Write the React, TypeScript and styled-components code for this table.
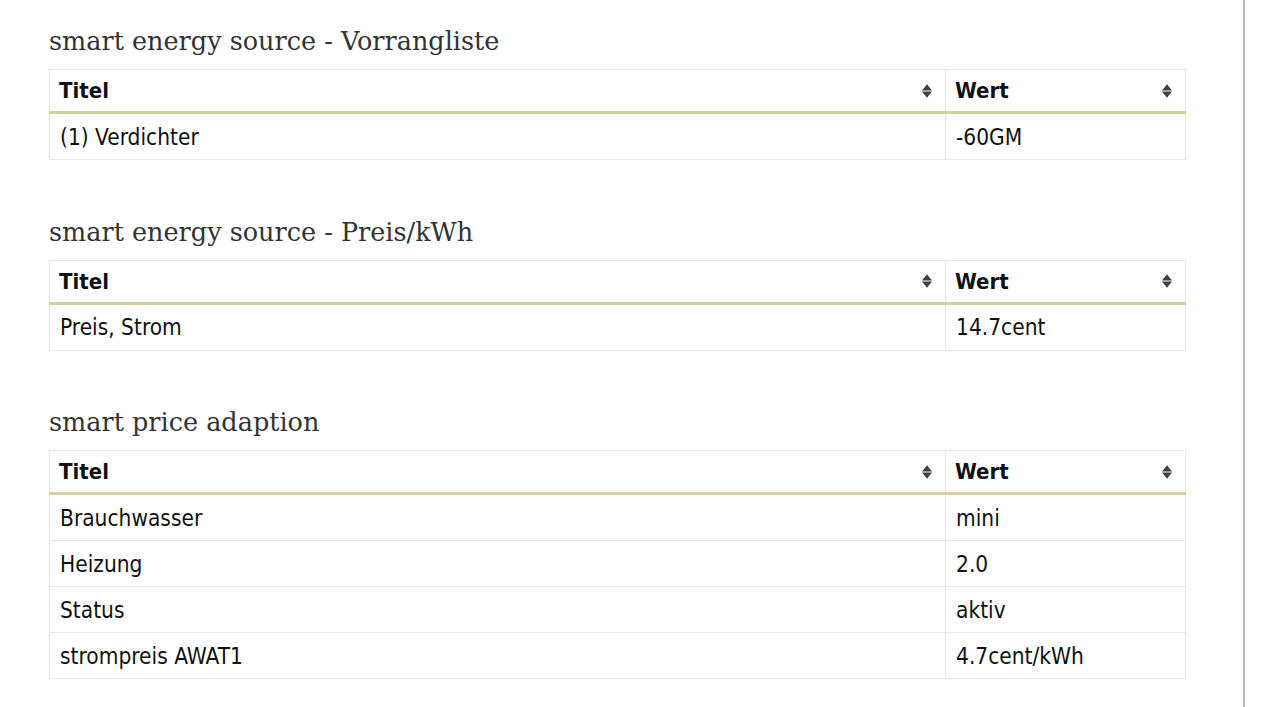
import React from 'react'
import styled, { createGlobalStyle } from 'styled-components'

const GlobalStyle = createGlobalStyle`
  html, body {
    margin: 0;
    padding: 0;
    background: #ffffff;
  }
`

interface Row {
  title: string,
  value: string
}

interface Section {
  heading: string,
  rows: Row[]
}

const sections: Section[] = [
  {
    heading: 'smart energy source - Vorrangliste',
    rows: [{ title: '(1) Verdichter', value: '-60GM' }]
  },
  {
    heading: 'smart energy source - Preis/kWh',
    rows: [{ title: 'Preis, Strom', value: '14.7cent' }]
  },
  {
    heading: 'smart price adaption',
    rows: [
      { title: 'Brauchwasser', value: 'mini' },
      { title: 'Heizung', value: '2.0' },
      { title: 'Status', value: 'aktiv' },
      { title: 'strompreis AWAT1', value: '4.7cent/kWh' }
    ]
  }
]

const SortIcon = () => (
  <S.Sort width="12" height="16" viewBox="0 0 12 16">
    <path d="M1 7.4 L6 1.2 L11 7.4 Z" fill="#404040" />
    <path d="M1 8.6 L6 14.8 L11 8.6 Z" fill="#404040" />
  </S.Sort>
)

export default function App() {
  return (<>
    <GlobalStyle />
    <S.Page>
      <S.Content>
        {
          sections.map(section => (
            <S.Section key={section.heading}>
              <S.Heading>{section.heading}</S.Heading>
              <S.Table>
                <thead>
                  <tr>
                    <S.Th wide={true}>
                      <S.HeadInner>Titel<SortIcon /></S.HeadInner>
                    </S.Th>
                    <S.Th>
                      <S.HeadInner>Wert<SortIcon /></S.HeadInner>
                    </S.Th>
                  </tr>
                </thead>
                <tbody>
                  {
                    section.rows.map(row => (
                      <tr key={row.title}>
                        <S.Td>{row.title}</S.Td>
                        <S.Td>{row.value}</S.Td>
                      </tr>
                    ))
                  }
                </tbody>
              </S.Table>
            </S.Section>
          ))
        }
      </S.Content>
    </S.Page>
  </>)
}

const S = {
  Page: styled.div`
    width: 1245px;
    min-height: 100vh;
    border-right: 2px solid #b4b4b4;
    box-sizing: border-box;
  `,
  Content: styled.div`
    width: 1137px;
    padding: 24px 0 0 49px;
    display: flex;
    flex-direction: column;
    gap: 54.6px;
  `,
  Section: styled.section`
    display: flex;
    flex-direction: column;
  `,
  Heading: styled.h2`
    margin: 0 0 11px;
    font-family: "DejaVu Serif", Georgia, serif;
    font-weight: normal;
    font-size: 25.5px;
    line-height: 34px;
    color: #333333;
  `,
  Table: styled.table`
    width: 100%;
    border-collapse: collapse;
    table-layout: fixed;
    font-family: "DejaVu Sans Condensed", Tahoma, sans-serif;
    font-size: 22.5px;
    color: #111111;
  `,
  Th: styled.th<{ wide?: boolean }>`
    width: ${props => props.wide ? '877px' : 'auto'};
    padding: 0 9px;
    height: 41px;
    text-align: left;
    font-weight: bold;
    font-size: 22px;
    border: 1px solid #e6e6e6;
    border-bottom: 3px solid #d3d0a4;
  `,
  HeadInner: styled.div`
    display: flex;
    align-items: center;
    justify-content: space-between;
  `,
  Sort: styled.svg`
    display: block;
    margin-right: 3px;
  `,
  Td: styled.td`
    padding: 0 10px;
    height: 45px;
    border: 1px solid #e6e6e6;
  `
}
